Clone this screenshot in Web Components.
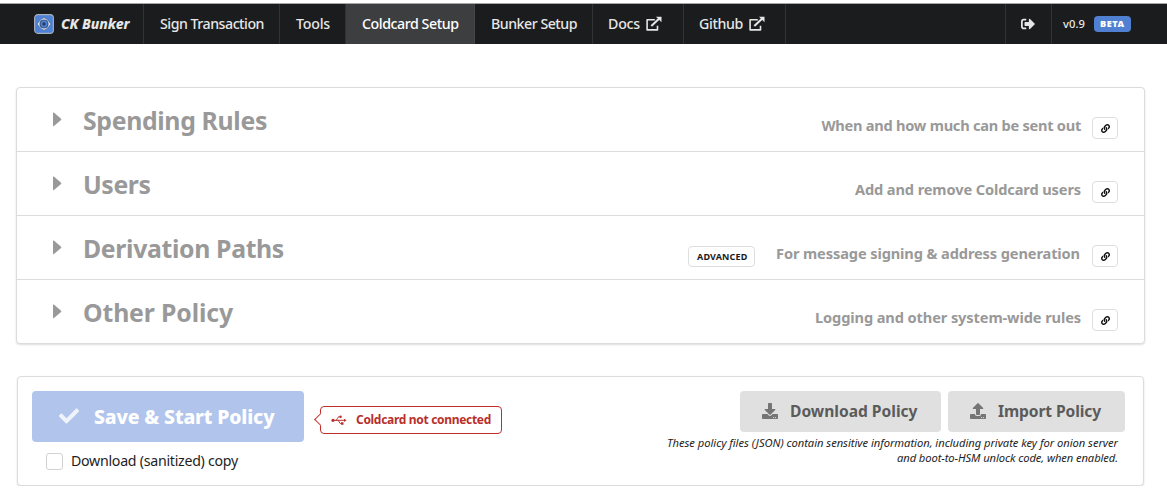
<!DOCTYPE html>
<html lang="en">
<head>
<meta charset="utf-8">
<title>CK Bunker</title>
<style>
body{margin:0;background:#fff;color:#1e1e1e;font-family:"Noto Sans","Open Sans",sans-serif;overflow:hidden}
</style>
</head>
<body>
<ck-app></ck-app>
<script>
const define = (name, html, setup) => {
  const t = document.createElement('template');
  t.innerHTML = html;
  customElements.define(name, class extends HTMLElement {
    constructor(){ super(); this.attachShadow({mode:'open'}).append(t.content.cloneNode(true)); }
    connectedCallback(){ if (setup) setup(this, this.shadowRoot); }
  });
};

// Single line of text tracked to a given measure.
define('ck-text', `<style>
:host{display:block;white-space:nowrap;flex:none}
span{display:inline-block;line-height:inherit;vertical-align:top}
</style><span><slot></slot></span>`, (el, root) => {
  const w = +el.getAttribute('w'), s = root.querySelector('span');
  el.style.width = w + 'px';
  el.fit = () => {
    s.style.letterSpacing = '0px';
    s.style.letterSpacing = ((w - s.getBoundingClientRect().width) / el.textContent.length).toFixed(4) + 'px';
  };
});

const dots = 'm-124 88c0-11-9-20-20-20s-20 9-20 20 9 20 20 20 20-9 20-20zm64 0c0-11-9-20-20-20s-20 9-20 20 9 20 20 20 20-9 20-20z';
const fa = d => `<svg viewBox="0 0 512 512"><path fill="currentColor" d="${d}"/></svg>`;
const ICONS = {
  check: fa('M173.898 439.404l-166.4-166.4c-9.997-9.997-9.997-26.206 0-36.204l36.203-36.204c9.997-9.998 26.207-9.998 36.204 0L192 312.69 432.095 72.596c9.997-9.997 26.207-9.997 36.204 0l36.203 36.204c9.997 9.997 9.997 26.206 0 36.204l-294.4 294.401c-9.998 9.997-26.207 9.997-36.204-.001z'),
  download: fa('M216 0h80c13.3 0 24 10.7 24 24v168h87.7c17.8 0 26.7 21.5 14.1 34.1L269.7 378.3c-7.5 7.5-19.8 7.5-27.3 0L90.1 226.1c-12.6-12.6-3.7-34.1 14.1-34.1H192V24c0-13.3 10.7-24 24-24zm296 376v112c0 13.3-10.7 24-24 24H24c-13.3 0-24-10.7-24-24V376c0-13.3 10.7-24 24-24h146.7l49 49c20.1 20.1 52.5 20.1 72.6 0l49-49H488c13.3 0 24 10.7 24 24z' + dots),
  upload: fa('M296 384h-80c-13.3 0-24-10.7-24-24V192h-87.7c-17.8 0-26.7-21.5-14.1-34.1L242.3 5.7c7.5-7.5 19.8-7.5 27.3 0l152.2 152.2c12.6 12.6 3.7 34.1-14.1 34.1H320v168c0 13.3-10.7 24-24 24zm216-8v112c0 13.3-10.7 24-24 24H24c-13.3 0-24-10.7-24-24V376c0-13.3 10.7-24 24-24h136v8c0 30.9 25.1 56 56 56h80c30.9 0 56-25.1 56-56v-8h136c13.3 0 24 10.7 24 24z' + dots),
  link: fa('M326.612 185.391c59.747 59.809 58.927 155.698.36 214.59-.11.12-.24.25-.36.37l-67.2 67.2c-59.27 59.27-155.699 59.262-214.96 0-59.27-59.26-59.27-155.7 0-214.96l37.106-37.106c9.84-9.84 26.786-3.3 27.294 10.606.648 17.722 3.826 35.527 9.69 52.721 1.986 5.822.567 12.262-3.783 16.612l-13.087 13.087c-28.026 28.026-28.905 73.66-1.155 101.96 28.024 28.579 74.086 28.749 102.325.51l67.2-67.19c28.191-28.191 28.073-73.757 0-101.83-3.701-3.694-7.429-6.564-10.341-8.569a16.037 16.037 0 0 1-6.947-12.606c-.396-10.567 3.348-21.456 11.698-29.806l21.054-21.055c5.521-5.521 14.182-6.199 20.584-1.731a152.482 152.482 0 0 1 20.522 17.197zM467.547 44.449c-59.261-59.262-155.69-59.27-214.96 0l-67.2 67.2c-.12.12-.25.25-.36.37-58.566 58.892-59.387 154.781.36 214.59a152.454 152.454 0 0 0 20.521 17.196c6.402 4.468 15.064 3.789 20.584-1.731l21.054-21.055c8.35-8.35 12.094-19.239 11.698-29.806a16.037 16.037 0 0 0-6.947-12.606c-2.912-2.005-6.64-4.875-10.341-8.569-28.073-28.073-28.191-73.639 0-101.83l67.2-67.19c28.239-28.239 74.3-28.069 102.325.51 27.75 28.3 26.872 73.934-1.155 101.96l-13.087 13.087c-4.35 4.35-5.769 10.79-3.783 16.612 5.864 17.194 9.042 34.999 9.69 52.721.509 13.906 17.454 20.446 27.294 10.606l37.106-37.106c59.271-59.259 59.271-155.699.001-214.959z'),
  signout: fa('M497 273L329 441c-15 15-41 4.5-41-17v-96H152c-13.3 0-24-10.7-24-24v-96c0-13.3 10.7-24 24-24h136V88c0-21.4 25.9-32 41-17l168 168c9.3 9.4 9.3 24.6 0 34zM192 436v-40c0-6.6-5.4-12-12-12H96c-17.7 0-32-14.3-32-32V160c0-17.7 14.3-32 32-32h84c6.6 0 12-5.4 12-12V76c0-6.6-5.4-12-12-12H96c-53 0-96 43-96 96v192c0 53 43 96 96 96h84c6.6 0 12-5.4 12-12z'),
  external: `<svg viewBox="0 0 16 16"><path d="M8.800 3.700H1.100v10.200h10.400V9.800" fill="none" stroke="currentColor" stroke-width="1.600" stroke-linejoin="round"/><path d="M5.300 10L13 2.800" stroke="currentColor" stroke-width="2.100" fill="none"/><path d="M10 .8H15.500V6.300z" fill="currentColor"/></svg>`,
  usb: `<svg viewBox="0 0 16 12"><g fill="none" stroke="currentColor" stroke-width="1"><path d="M2 6.300H13.500M4.800 6.300C6.600 6.300 6.200 2.800 8 2.800H9.500M6.700 6.300C8.400 6.300 8 9.600 9.800 9.600H11"/></g><g fill="currentColor"><circle cx="2" cy="6.300" r="1.600"/><circle cx="9.600" cy="2.800" r="1.200"/><path d="M13 4.700L15.600 6.300L13 7.900zM10 8.300h2.500v2.500H10z"/></g></svg>`,
  caret: `<svg viewBox="0 0 9 15"><path fill="currentColor" d="M0 1.200Q0 0 .9.6L8.100 6.700Q8.700 7.300 8.100 7.900L.9 14Q0 14.600 0 13.400z"/></svg>`,
  logo: `<svg viewBox="0 0 20 20"><rect x=".6" y=".6" width="18.800" height="18.800" rx="3.400" fill="#4d82d6" stroke="#a9b0ba" stroke-width="1.100"/><path d="M10 3.800C12.200 4.200 14.400 6.800 16.800 10C14.400 13.200 12.200 15.800 10 16.200C7.800 15.800 5.600 13.200 3.200 10C5.600 6.800 7.800 4.200 10 3.800z" fill="#eef2f8" stroke="#54698c" stroke-width=".7"/><circle cx="10" cy="10" r="4" fill="#4d82d6" stroke="#34527f" stroke-width="1.200"/><circle cx="10" cy="10" r="1.700" fill="#233d68"/></svg>`
};
define('ck-icon', `<style>:host{display:block;flex:none}svg{display:block;width:100%;height:100%}</style>`, (el, root) => {
  const h = document.createElement('template');
  h.innerHTML = ICONS[el.getAttribute('name')];
  root.append(h.content);
});

define('ck-nav-item', `<style>
:host{display:flex;box-sizing:border-box;height:40px;border-right:1px solid #323335;padding-left:16px;gap:6px;color:#e6e6e6;font-size:14.200px;font-weight:500;line-height:40px;flex:none}
:host([active]){background:#3d3e3f;border-color:#454647;color:#fff}
</style><slot></slot>`);

define('ck-nav', `<style>
:host{display:flex;height:40px;background:#1b1c1d;border-top:1px solid #a5a5a5;margin-top:3px;color:#e8e8e8}
.brand{width:144px;padding-left:34px;gap:7px}
.brand ck-icon{width:20px;height:20px;margin-top:10px}
.brand ck-text{font-weight:800;font-style:italic;font-size:14px}
.ext{width:16px;height:16px;margin-top:12px}
.out{margin-left:auto;width:47px;border-left:1px solid #323335}
.out ck-icon{width:14px;height:14px;margin:13px 0 0 -1px}
.ver{display:flex;box-sizing:border-box;width:104px;font-size:11.200px;font-weight:500;line-height:40px;gap:9px;margin-left:11px}
.beta{box-sizing:border-box;width:37px;height:16px;margin-top:12px;border-radius:4px;background:#4f80d1;color:#fff;font-weight:900;font-size:9.100px;line-height:16px;padding-left:6px}
</style>
<ck-nav-item class="brand"><ck-icon name="logo"></ck-icon><ck-text w="68.500">CK Bunker</ck-text></ck-nav-item>
<ck-nav-item style="width:136px"><ck-text w="104">Sign Transaction</ck-text></ck-nav-item>
<ck-nav-item style="width:66px"><ck-text w="34">Tools</ck-text></ck-nav-item>
<ck-nav-item active style="width:129px"><ck-text w="96.500">Coldcard Setup</ck-text></ck-nav-item>
<ck-nav-item style="width:118px"><ck-text w="86">Bunker Setup</ck-text></ck-nav-item>
<ck-nav-item style="width:91px;padding-left:15px"><ck-text w="32">Docs</ck-text><ck-icon class="ext" name="external"></ck-icon></ck-nav-item>
<ck-nav-item style="width:102px;padding-left:15px"><ck-text w="44">Github</ck-text><ck-icon class="ext" name="external"></ck-icon></ck-nav-item>
<ck-nav-item class="out"><ck-icon name="signout"></ck-icon></ck-nav-item>
<div class="ver"><ck-text w="22">v0.9</ck-text><div class="beta"><ck-text w="24.500">BETA</ck-text></div></div>`);

define('ck-section', `<style>
:host{display:flex;box-sizing:border-box;height:64px;border-bottom:1px solid #dcdcdc;padding:0 26px 0 36px;color:#999}
:host(:last-of-type){border-bottom:0}
.caret{width:9px;height:15px;margin-top:24px}
.t{margin:12px auto 0 21px;font-size:24.800px;line-height:40px;font-weight:700}
.s{font-size:14.600px;line-height:24px;margin-top:25px;font-weight:700}
.btn{box-sizing:border-box;width:26px;height:22px;margin:29px 0 0 11px;border:1px solid #dedede;border-radius:4px;color:#0c0c0d;display:grid;place-items:center}
.btn ck-icon{width:9px;height:9px}
</style><ck-icon class="caret" name="caret"></ck-icon><div class="t"><slot name="title"></slot></div><slot name="tag"></slot><div class="s"><slot></slot></div><div class="btn"><ck-icon name="link"></ck-icon></div>`);

define('ck-tag', `<style>:host{display:block;box-sizing:border-box;width:67px;height:21px;border:1px solid #dedede;border-radius:4px;margin:30px 21px 0 0;padding-left:8px;color:#1b1c1d;font-size:9px;line-height:19px;font-weight:700}</style><slot></slot>`);

define('ck-button', `<style>
:host{display:flex;box-sizing:border-box;height:41px;background:#e0e0e0;border-radius:4px;color:#5b5b5b;font-weight:700;font-size:15.600px;line-height:40px;padding-left:22px}
ck-icon{width:16px;height:16px;margin:12px 12px 0 0;color:#757575}
:host([primary]){height:51px;background:#b1c5ec;color:#fff;font-size:19.400px;line-height:51px;padding-left:27px;font-weight:800}
:host([primary]) ck-icon{width:20px;height:20px;margin:15px 15px 0 0;color:#eff3fb}
</style><ck-icon></ck-icon><slot></slot>`, (el, root) => {
  const old = root.querySelector('ck-icon'), i = document.createElement('ck-icon');
  i.setAttribute('name', el.getAttribute('icon'));
  old.replaceWith(i);
});

define('ck-pointing-label', `<style>
:host{display:flex;position:relative;box-sizing:border-box;width:182px;height:28px;border:1px solid #c22f2b;border-radius:4px;color:#b92f2b;background:#fff;font-size:12px;line-height:26px;font-weight:700;padding-left:10px}
:host::before{content:"";position:absolute;left:-5px;top:8px;width:8px;height:8px;background:#fff;border:1px solid #c22f2b;border-width:0 0 1px 1px;transform:rotate(45deg)}
ck-icon{width:16px;height:12px;margin:7px 9px 0 0}
</style><ck-icon name="usb"></ck-icon><slot></slot>`);

define('ck-checkbox', `<style>
:host{display:flex;gap:8px;font-size:14.200px;line-height:20px}
i{box-sizing:border-box;width:17px;height:17px;border:1px solid #d2d2d3;border-radius:3px;background:#fff;margin-top:2px}
</style><i></i><slot></slot>`);

define('ck-card', `<style>:host{display:block;box-sizing:border-box;border:1px solid #dcdcdc;border-radius:4px;box-shadow:0 1px 2px rgba(34,36,38,.15);background:#fff}</style><slot></slot>`);

define('ck-app', `<style>
:host{display:block}
.rules{width:1129px;height:257px;margin:43px 0 0 16px}
.actions{width:1127px;height:110px;margin:32px 0 0 17px}
.row{display:flex;padding:14px 18px 0 14px}
.left ck-checkbox{margin:9px 0 0 14px}
ck-pointing-label{margin:15px auto 0 16px}
.btns{display:flex;gap:7px;justify-content:flex-end}
.note{font-style:italic;font-size:11.200px;line-height:15px;color:#1e1e1e;margin:3px 7px 0 0;display:flex;flex-direction:column;align-items:flex-end}
</style>
<ck-nav></ck-nav>
<ck-card class="rules">
<ck-section><ck-text slot="title" w="184">Spending Rules</ck-text><ck-text w="259.500">When and how much can be sent out</ck-text></ck-section>
<ck-section><ck-text slot="title" w="67.500">Users</ck-text><ck-text w="226">Add and remove Coldcard users</ck-text></ck-section>
<ck-section><ck-text slot="title" w="201">Derivation Paths</ck-text><ck-tag slot="tag"><ck-text w="50.500">ADVANCED</ck-text></ck-tag><ck-text w="304" style="margin-right:1px">For message signing &amp; address generation</ck-text></ck-section>
<ck-section><ck-text slot="title" w="150">Other Policy</ck-text><ck-text w="266">Logging and other system-wide rules</ck-text></ck-section>
</ck-card>
<ck-card class="actions"><div class="row">
<div class="left"><ck-button primary icon="check" style="width:272px"><ck-text w="180.500">Save &amp; Start Policy</ck-text></ck-button>
<ck-checkbox><ck-text w="167">Download (sanitized) copy</ck-text></ck-checkbox></div>
<ck-pointing-label><ck-text w="135">Coldcard not connected</ck-text></ck-pointing-label>
<div class="right"><div class="btns"><ck-button icon="download" style="width:201px"><ck-text w="127.500">Download Policy</ck-text></ck-button><ck-button icon="upload" style="width:177px"><ck-text w="103">Import Policy</ck-text></ck-button></div>
<div class="note"><ck-text w="451">These policy files (JSON) contain sensitive information, including private key for onion server</ck-text><ck-text w="221">and boot-to-HSM unlock code, when enabled.</ck-text></div></div>
</div></ck-card>`);

// Track every line once the whole tree is laid out.
const fitAll = root => root.querySelectorAll('*').forEach(e => {
  if (e.fit) e.fit();
  if (e.shadowRoot) fitAll(e.shadowRoot);
});
fitAll(document);
</script>
</body>
</html>
